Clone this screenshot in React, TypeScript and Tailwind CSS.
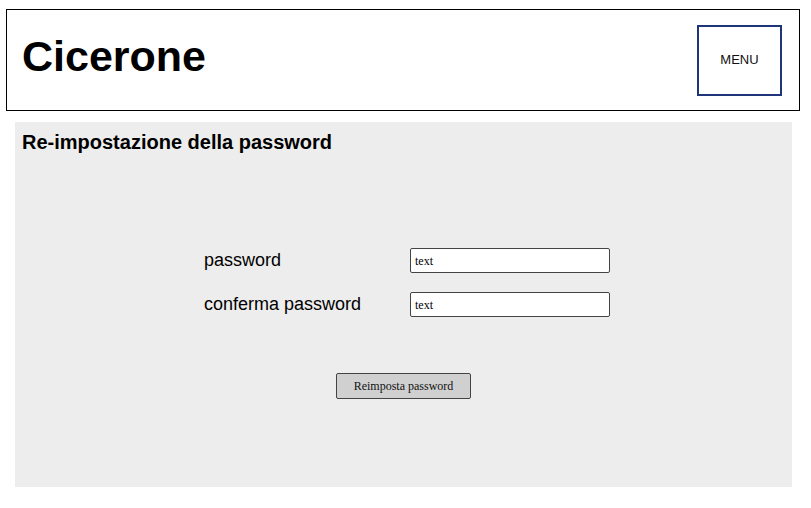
const App = () => {
  return (
    <div className="w-[811px] h-[508px] bg-white text-black font-['Liberation_Sans',Arial,sans-serif] overflow-hidden">
      <header className="ml-[6px] mt-[9px] w-[794px] h-[102px] border border-black flex items-center justify-between pl-[15px] pr-[17px]">
        <h1 className="text-[43px] font-bold leading-none mt-[-7px]">Cicerone</h1>
        <button className="w-[85px] h-[71px] border-2 border-[#1f3579] text-[13px] text-[#111] flex items-center justify-center">
          MENU
        </button>
      </header>
      <main className="ml-[15px] mt-[11px] w-[777px] h-[365px] bg-[#ededed] flex flex-col pt-[8px]">
        <h2 className="pl-[7px] text-[20px] font-bold leading-[24px]">Re-impostazione della password</h2>
        <div className="mt-[94px] pl-[189px] flex flex-col gap-[19px]">
          <div className="flex items-center h-[25px]">
            <span className="w-[206px] text-[18px]">password</span>
            <div className="w-[200px] h-[25px] bg-white border border-[#444] rounded-[2px] flex items-center pl-[4px] text-[12px] font-['Liberation_Serif',serif]">
              text
            </div>
          </div>
          <div className="flex items-center h-[25px]">
            <span className="w-[206px] text-[18px]">conferma password</span>
            <div className="w-[200px] h-[25px] bg-white border border-[#444] rounded-[2px] flex items-center pl-[4px] text-[12px] font-['Liberation_Serif',serif]">
              text
            </div>
          </div>
        </div>
        <div className="mt-[56px] flex justify-center">
          <button className="w-[135px] h-[26px] bg-[#d0d0d0] border border-[#444] rounded-[2px] text-[12px] font-['Liberation_Serif',serif] text-[#111]">
            Reimposta password
          </button>
        </div>
      </main>
    </div>
  );
};

export default App;
